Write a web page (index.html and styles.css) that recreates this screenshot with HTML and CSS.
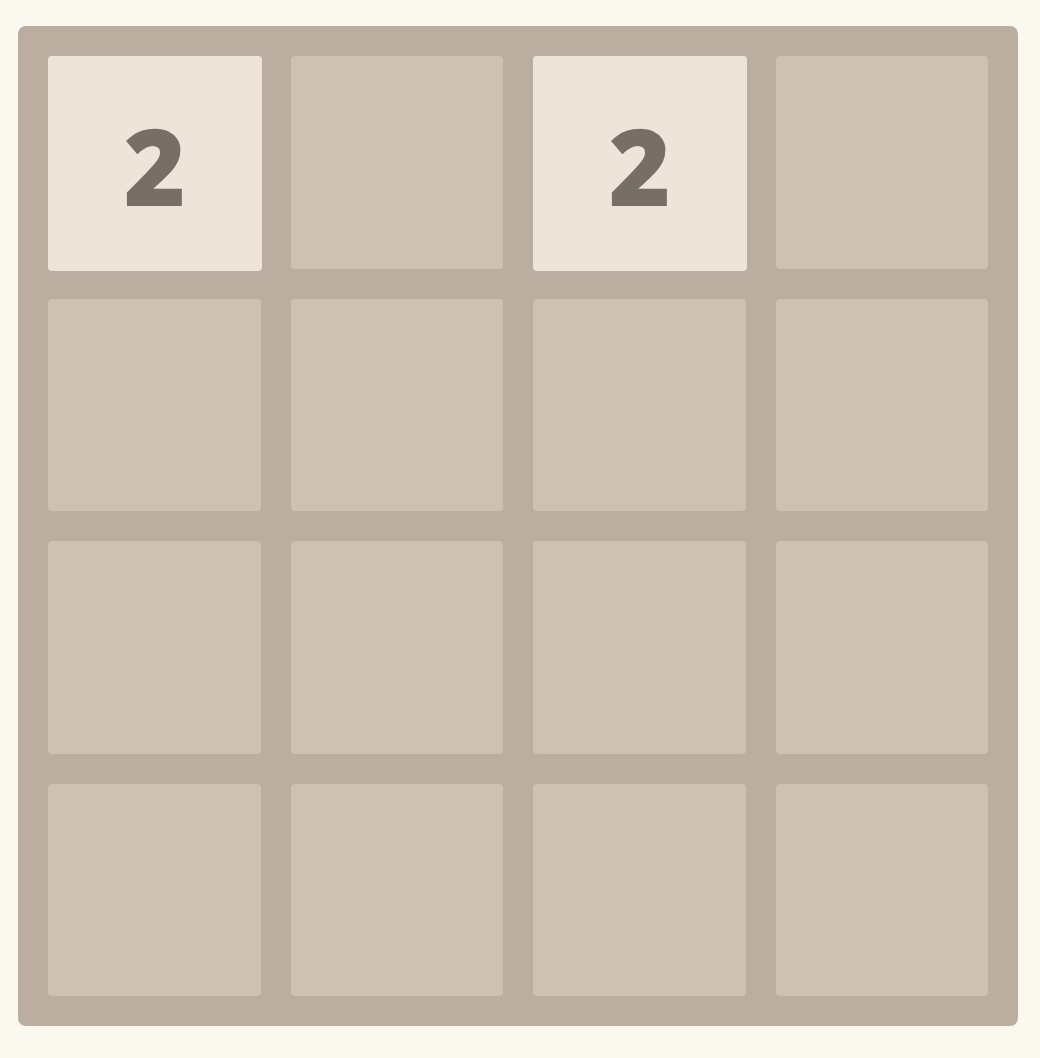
FILE: index.html
```html
<!DOCTYPE html>
<html lang="en">
<head>
    <meta charset="UTF-8">
    <meta name="viewport" content="width=device-width, initial-scale=1.0">
    <title>2048</title>
    <link rel="stylesheet" href="styles.css">
</head>
<body>
    <div class="game-container">
        <div class="grid">
            <div class="cell"><div class="tile tile-2">2</div></div>
            <div class="cell"></div>
            <div class="cell"><div class="tile tile-2">2</div></div>
            <div class="cell"></div>

            <div class="cell"></div>
            <div class="cell"></div>
            <div class="cell"></div>
            <div class="cell"></div>

            <div class="cell"></div>
            <div class="cell"></div>
            <div class="cell"></div>
            <div class="cell"></div>

            <div class="cell"></div>
            <div class="cell"></div>
            <div class="cell"></div>
            <div class="cell"></div>
        </div>
    </div>
</body>
</html>
```

FILE: styles.css
```css
body {
    margin: 0;
    padding: 26px 18px;
    background-color: #faf8ef;
    font-family: "Open Sans", "DejaVu Sans", sans-serif;
}

.game-container {
    width: 1000px;
    height: 1000px;
    box-sizing: border-box;
    padding: 30px;
    background-color: #bbada0;
    border-radius: 8px;
}

.grid {
    display: grid;
    grid-template-columns: repeat(4, 1fr);
    grid-template-rows: repeat(4, 1fr);
    gap: 30px;
    height: 100%;
}

.cell {
    background-color: #cdc1b4;
    border-radius: 4px;
    position: relative;
}

.tile {
    position: absolute;
    inset: 0 -1px -2px 0;
    display: flex;
    justify-content: center;
    align-items: center;
    padding-top: 4px;
    border-radius: 4px;
    font-weight: 800;
    font-size: 106px;
    line-height: 1;
}

.tile-2 {
    background-color: #eee4da;
    color: #776e65;
}
```
